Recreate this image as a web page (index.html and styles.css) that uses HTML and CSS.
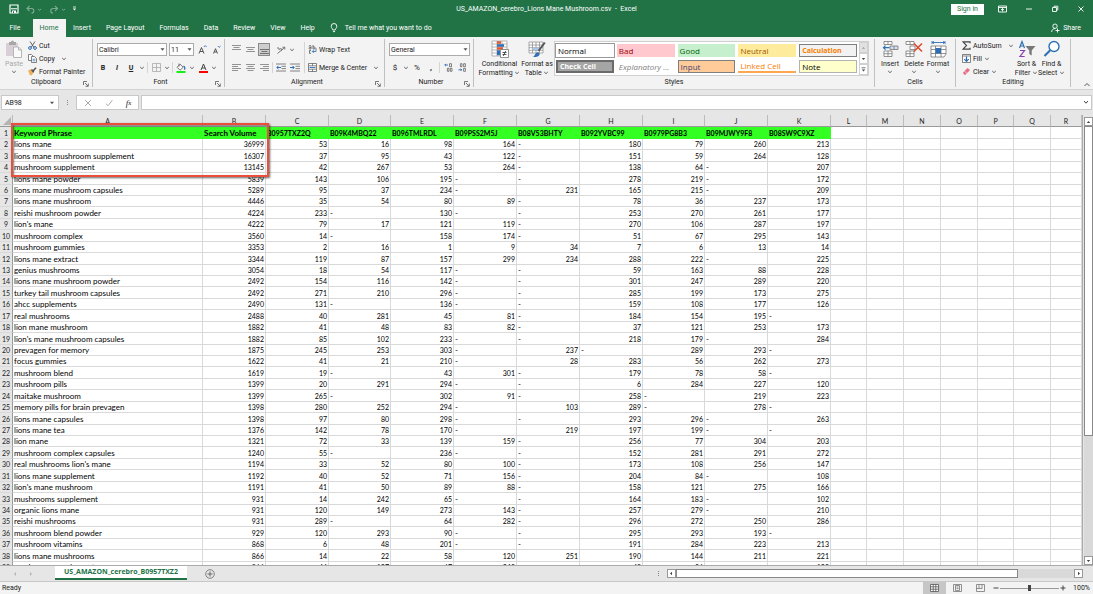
FILE: index.html
```html
<!DOCTYPE html>
<html lang="en">
<head>
    <meta charset="UTF-8">
    <meta name="viewport" content="width=device-width, initial-scale=1.0">
    <title>US_AMAZON_cerebro_Lions Mane Mushroom.csv - Excel</title>
    <link rel="stylesheet" href="styles.css">
</head>
<body>

<!-- shared icons -->
<svg class="defs">
  <symbol id="chev" viewBox="0 0 6 4"><path d="M1.2 1 3 2.7 4.8 1" fill="none" stroke="#555" stroke-width=".9"/></symbol>
  <symbol id="launch" viewBox="0 0 6 6"><path d="M.5 4V.5H4M2 2l3 3M5.3 2.5v2.8H2.5" fill="none" stroke="#555" stroke-width=".8"/></symbol>
</svg>

<div class="app">

  <!-- title bar -->
  <header class="titlebar">
    <div class="quick">
      <button aria-label="Save"><svg width="10" height="10" viewBox="0 0 10 10"><path d="M1 1h8v8H1z" fill="none" stroke="#fff" stroke-width="1.2"/><path d="M2 4.200h6v1H2zM3 6.500h4V9H3z" fill="#fff"/><path d="M4 7.300h1V9H4z" fill="#217346"/></svg></button>
      <button aria-label="Undo" class="dim"><svg width="16" height="9" viewBox="0 0 16 9"><path d="M3.500 1 1 3.500 3.500 6M1 3.500h4.500a2.300 2.300 0 0 1 0 4.600" fill="none" stroke="#fff" stroke-width="1.100"/><path d="M12 4l1.500 1.300L15 4" fill="none" stroke="#fff"/></svg></button>
      <button aria-label="Redo" class="dim"><svg width="16" height="9" viewBox="0 0 16 9"><path d="M6 1l2.500 2.500L6 6M8.500 3.500H4a2.300 2.300 0 0 0 0 4.600" fill="none" stroke="#fff" stroke-width="1.100"/><path d="M13 4l1.500 1.300L16 4" fill="none" stroke="#fff"/></svg></button>
      <button aria-label="Customize toolbar"><svg width="5" height="6" viewBox="0 0 5 6"><path d="M1 1h3" stroke="#fff" stroke-width=".8"/><path d="M.8 2.600h3.400L2.500 4.600z" fill="#fff"/></svg></button>
    </div>
    <h1 class="doc-title">US_AMAZON_cerebro_Lions Mane Mushroom.csv&nbsp; -&nbsp; Excel</h1>
    <div class="window-btns">
      <button class="signin">Sign in</button>
      <button aria-label="Ribbon options"><svg width="9" height="8" viewBox="0 0 9 8"><path d="M.5 1h8v6h-8zM.5 2.500h8M4.500 6.500v-3M3 5l1.500-1.500L6 5" fill="none" stroke="#fff" stroke-width=".9"/></svg></button>
      <button aria-label="Minimize"><svg width="8" height="8" viewBox="0 0 8 8"><path d="M1 4h6" stroke="#fff" stroke-width=".9"/></svg></button>
      <button aria-label="Restore"><svg width="8" height="8" viewBox="0 0 8 8"><path d="M1.500 2.500h4v4h-4zM3 2.500V1.200h3.800V5H5.500" fill="none" stroke="#fff" stroke-width=".9"/></svg></button>
      <button aria-label="Close"><svg width="8" height="8" viewBox="0 0 8 8"><path d="M1.500 1.500l5 5M6.500 1.500l-5 5" stroke="#fff" stroke-width=".9"/></svg></button>
    </div>
  </header>

  <!-- ribbon tabs -->
  <nav class="tabs">
    <button class="tab file">File</button>
    <button class="tab active">Home</button>
    <button class="tab">Insert</button>
    <button class="tab">Page Layout</button>
    <button class="tab">Formulas</button>
    <button class="tab">Data</button>
    <button class="tab">Review</button>
    <button class="tab">View</button>
    <button class="tab">Help</button>
    <button class="tab tell"><svg width="8" height="10" viewBox="0 0 8 10"><path d="M2.800 7c0-1.500-1.600-1.800-1.600-3.700a2.800 2.800 0 0 1 5.600 0C6.800 5.200 5.200 5.500 5.200 7zM2.900 8.600h2.200" fill="none" stroke="#fff" stroke-width=".9"/></svg>Tell me what you want to do</button>
    <button class="tab share"><svg width="9" height="10" viewBox="0 0 9 10"><circle cx="4" cy="3.200" r="2.200" fill="none" stroke="#fff" stroke-width=".9"/><path d="M.7 9c0-2.200 1.500-3.400 3.500-3.400M6.500 5.500v4M4.500 7.500h4" fill="none" stroke="#fff" stroke-width=".9"/></svg>Share</button>
  </nav>

  <!-- ribbon -->
  <div class="ribbon">

    <section class="group clipboard">
      <div class="tools">
        <button class="big paste" disabled><svg width="18" height="18" viewBox="0 0 18 18"><path d="M1 3h12v13H1z" fill="#d8d0d6"/><path d="M4 2h2a1.500 1.500 0 0 1 3 0h2v3H4z" fill="#a7a7a7"/><path d="M8.500 7h5l3 3v7.500h-8z" fill="#fafafa" stroke="#b5b5b5"/><path d="M13.500 7v3h3" fill="none" stroke="#b5b5b5"/></svg><span>Paste</span><svg class="chev"><use href="#chev"/></svg></button>
        <div class="stack">
          <button class="row"><svg width="9" height="9" viewBox="0 0 9 9"><path d="M2 .5l4 6M7 .5l-4 6" stroke="#555" stroke-width=".9"/><circle cx="2" cy="7" r="1.400" fill="none" stroke="#2b6cb5"/><circle cx="7" cy="7" r="1.400" fill="none" stroke="#2b6cb5"/></svg>Cut</button>
          <button class="row"><svg width="9" height="9" viewBox="0 0 9 9"><path d="M.5.5h3l1.500 1.500v4.500H.5z" fill="#fff" stroke="#666" stroke-width=".8"/><path d="M3.500 2.500h3L8.500 4.500v4h-5z" fill="#fff" stroke="#666" stroke-width=".8"/><path d="M4.500 5.200h3M4.500 6.800h3" stroke="#2b6cb5" stroke-width=".7"/></svg>Copy <svg class="chev wide"><use href="#chev"/></svg></button>
          <button class="row"><svg width="9" height="9" viewBox="0 0 9 9"><path d="M0 3.500l3-1.200 2.800 3L3.500 8.500 1.800 8z" fill="#efb15c"/><path d="M3.500 2.500l2.300 2.700M5 4l3-3.200" stroke="#555" stroke-width="1.600"/></svg>Format Painter</button>
        </div>
      </div>
      <h2>Clipboard <svg class="launch"><use href="#launch"/></svg></h2>
    </section>

    <section class="group font">
      <div class="tools rows">
        <div class="line">
          <select class="f-name" aria-label="Font"><option>Calibri</option></select>
          <select class="f-size" aria-label="Font size"><option>11</option></select>
          <button class="ic" aria-label="Increase font size"><svg width="9" height="9" viewBox="0 0 9 9"><path d="M1 8.500L3.500 2.500 6 8.500M2 6.500h3" fill="none" stroke="#444" stroke-width=".9"/><path d="M5.800 2l1.400-1.400L8.600 2" fill="none" stroke="#2b6cb5" stroke-width=".9"/></svg></button>
          <button class="ic" aria-label="Decrease font size"><svg width="9" height="9" viewBox="0 0 9 9"><path d="M1.500 8.500L3.500 3.700 5.500 8.500M2.300 7h2.400" fill="none" stroke="#444" stroke-width=".9"/><path d="M5.800 1l1.400 1.400L8.600 1" fill="none" stroke="#2b6cb5" stroke-width=".9"/></svg></button>
        </div>
        <div class="line">
          <button class="ic"><b>B</b></button>
          <button class="ic"><b><i>I</i></b></button>
          <button class="ic"><b><u>U</u></b></button>
          <svg class="chev"><use href="#chev"/></svg>
          <span class="sep"></span>
          <button class="ic" aria-label="Borders"><svg width="9" height="9" viewBox="0 0 9 9"><path d="M.5.5h8v8h-8zM4.500.5v8M.5 4.500h8" fill="none" stroke="#aaa" stroke-width=".8"/></svg></button>
          <svg class="chev"><use href="#chev"/></svg>
          <span class="sep"></span>
          <button class="ic" aria-label="Fill color"><svg width="10" height="10" viewBox="0 0 10 10"><path d="M4 1.200l3.200 3L4 7.200 1.200 4.300zM3 .5v3" fill="#fff" stroke="#555" stroke-width=".8"/><path d="M7.500 3c1.600 1 1.600 2.500.9 3.600" fill="none" stroke="#2b6cb5" stroke-width="1.300"/><path d="M.5 8h9v2h-9z" fill="#17f017"/></svg></button>
          <svg class="chev"><use href="#chev"/></svg>
          <button class="ic" aria-label="Font color"><svg width="9" height="10" viewBox="0 0 9 10"><path d="M2 7L4.500 1 7 7M3 5h3" fill="none" stroke="#444"/><path d="M0 8h9v2H0z" fill="#f00"/></svg></button>
          <svg class="chev"><use href="#chev"/></svg>
        </div>
      </div>
      <h2>Font <svg class="launch"><use href="#launch"/></svg></h2>
    </section>

    <section class="group align">
      <div class="tools">
        <div class="rows">
          <div class="line">
            <button class="ic" aria-label="Top align"><svg width="9" height="9" viewBox="0 0 9 9"><path d="M0 .5h9M1.500 2.500h6M0 4.500h9" stroke="#888" stroke-width=".9"/></svg></button>
            <button class="ic" aria-label="Middle align"><svg width="9" height="9" viewBox="0 0 9 9"><path d="M0 2.500h9M1.500 4.500h6M0 6.500h9" stroke="#888" stroke-width=".9"/></svg></button>
            <button class="ic on" aria-label="Bottom align"><svg width="9" height="9" viewBox="0 0 9 9"><path d="M0 4.500h9M1.500 6.500h6M0 8.500h9" stroke="#666" stroke-width=".9"/></svg></button>
            <button class="ic orient" aria-label="Orientation"><svg width="10" height="9" viewBox="0 0 10 9"><path d="M1 3.500a1.200 1.200 0 1 1 1.800 1.500M3.800 4.500a1.100 1.100 0 1 1 1.500 1.300M1.500 8.500l7-6M6.500 2.200h2.300v2.300" fill="none" stroke="#555" stroke-width=".8"/></svg></button>
            <svg class="chev"><use href="#chev"/></svg>
          </div>
          <div class="line">
            <button class="ic" aria-label="Align left"><svg width="9" height="9" viewBox="0 0 9 9"><path d="M0 1.500h9M0 3.500h6M0 5.500h9M0 7.500h6" stroke="#888" stroke-width=".9"/></svg></button>
            <button class="ic" aria-label="Center"><svg width="9" height="9" viewBox="0 0 9 9"><path d="M0 1.500h9M1.500 3.500h6M0 5.500h9M1.500 7.500h6" stroke="#888" stroke-width=".9"/></svg></button>
            <button class="ic" aria-label="Align right"><svg width="9" height="9" viewBox="0 0 9 9"><path d="M0 1.500h9M3 3.500h6M0 5.500h9M3 7.500h6" stroke="#888" stroke-width=".9"/></svg></button>
            <span class="sep"></span>
            <button class="ic" aria-label="Decrease indent"><svg width="10" height="9" viewBox="0 0 10 9"><path d="M0 1h10M5.500 3.300H10M5.500 5.600H10M0 8h10" stroke="#777" stroke-width=".9"/><path d="M5 4.500H1M2.500 2.800L.8 4.500l1.700 1.700" fill="none" stroke="#2b6cb5"/></svg></button>
            <button class="ic" aria-label="Increase indent"><svg width="10" height="9" viewBox="0 0 10 9"><path d="M0 1h10M5.500 3.300H10M5.500 5.600H10M0 8h10" stroke="#777" stroke-width=".9"/><path d="M0 4.500h4M2.500 2.800l1.700 1.700-1.700 1.700" fill="none" stroke="#2b6cb5"/></svg></button>
          </div>
        </div>
        <span class="divider"></span>
        <div class="rows">
          <div class="line"><button class="row"><svg width="9" height="9" viewBox="0 0 9 9"><path d="M1 1.500a1 1 0 0 1 2 0V4H1.800a.7.7 0 0 1 0-1.500H3M5 0v4h1a1 1 0 0 0 0-2.200H5M3 5.500H1.500v2.800H3" fill="none" stroke="#555" stroke-width=".8"/><path d="M8 3v3.500H4.500M5.800 5L4.300 6.500 5.800 8" fill="none" stroke="#2b6cb5" stroke-width=".8"/></svg>Wrap Text</button></div>
          <div class="line"><button class="row"><svg width="9" height="9" viewBox="0 0 9 9"><path d="M.5.5h8v8h-8zM.5 2.800h8M.5 6.200h8M4.500.5v2.300M4.500 6.200v2.300" fill="#fff" stroke="#666" stroke-width=".8"/><path d="M1.500 4.500h6" stroke="#2b6cb5" stroke-width=".9"/></svg>Merge &amp; Center <svg class="chev wide"><use href="#chev"/></svg></button></div>
        </div>
      </div>
      <h2>Alignment <svg class="launch"><use href="#launch"/></svg></h2>
    </section>

    <section class="group number">
      <div class="tools rows">
        <div class="line"><select class="f-num" aria-label="Number format"><option>General</option></select></div>
        <div class="line">
          <button class="ic sym">$</button>
          <svg class="chev"><use href="#chev"/></svg>
          <button class="ic sym">%</button>
          <button class="ic sym"><b>,</b></button>
          <span class="sep"></span>
          <button class="ic" aria-label="Increase decimal"><svg width="9" height="9" viewBox="0 0 9 9"><path d="M4 2H.8M2 .8L.8 2 2 3.200" fill="none" stroke="#2b6cb5" stroke-width=".9"/><path d="M5.500.7h2v3h-2zM3.400 5.300h1.600v3H3.400zM6.400 5.300H8v3H6.400z" fill="none" stroke="#666" stroke-width=".8"/></svg></button>
          <button class="ic" aria-label="Decrease decimal"><svg width="9" height="9" viewBox="0 0 9 9"><path d="M.5 6.800h3.200M2.500 5.600l1.200 1.200L2.500 8" fill="none" stroke="#2b6cb5" stroke-width=".9"/><path d="M2.400.7H4v3H2.400zM5.600.7h1.800v3H5.600zM5.600 5.300h1.800v3H5.600z" fill="none" stroke="#666" stroke-width=".8"/></svg></button>
        </div>
      </div>
      <h2>Number <svg class="launch"><use href="#launch"/></svg></h2>
    </section>

    <section class="group styles">
      <div class="tools">
        <button class="big cond"><svg width="18" height="18" viewBox="0 0 18 18"><path d="M1 1h15v15H1zM1 4h15M1 7h15M1 10h15M1 13h15M6 1v15M11 1v15" fill="#fff" stroke="#999" stroke-width=".7"/><path d="M6 1.300h4v2.400H6zM6 7.300h6v2.400H6z" fill="#e0592f"/><path d="M6 4.300h7v2.400H6zM6 10.300h3v5H6z" fill="#2f6fb3"/><path d="M9.500 9.500h8v8h-8z" fill="#fff" stroke="#777" stroke-width=".8"/><path d="M11.500 12.500h4M11.500 14.500h4M14.700 11l-2.400 5" stroke="#333" stroke-width=".8"/></svg><span>Conditional<br>Formatting <svg class="chev"><use href="#chev"/></svg></span></button>
        <button class="big fmt"><svg width="18" height="18" viewBox="0 0 18 18"><path d="M1 2h14v11H1zM1 5h14M1 7.700h14M1 10.300h14M4.500 2v11M8 2v11M11.500 2v11" fill="#fff" stroke="#888" stroke-width=".7"/><path d="M4.500 7.700h8v2.600h-8z" fill="#a9c6e6"/><path d="M16.800 2.500L10.500 11" stroke="#555" stroke-width="2"/><path d="M4.500 17c2.300-.2 2.500-4.500 5.500-4.700 2.200.4 2 2.700.5 3.800-1.700 1.200-4 1.100-6 .9z" fill="#2f6fb3"/></svg><span>Format as<br>Table <svg class="chev"><use href="#chev"/></svg></span></button>
        <div class="gallery">
          <div class="swatches">
            <button class="sw normal">Normal</button>
            <button class="sw bad">Bad</button>
            <button class="sw good">Good</button>
            <button class="sw neutral">Neutral</button>
            <button class="sw calc">Calculation</button>
            <button class="sw check">Check Cell</button>
            <button class="sw expl">Explanatory ...</button>
            <button class="sw input">Input</button>
            <button class="sw linked">Linked Cell</button>
            <button class="sw note">Note</button>
          </div>
          <div class="g-scroll">
            <button class="off" aria-label="Scroll up"><svg width="5" height="4" viewBox="0 0 5 4"><path d="M1 2.800L2.500 1 4 2.800z" fill="#999"/></svg></button>
            <button aria-label="Scroll down"><svg width="5" height="4" viewBox="0 0 5 4"><path d="M.8 1L2.500 3 4.200 1z" fill="#444"/></svg></button>
            <button aria-label="More styles"><svg width="5" height="5" viewBox="0 0 5 5"><path d="M.5.5h4v.8h-4zM.8 2.500L2.500 4.500 4.200 2.500z" fill="#444"/></svg></button>
          </div>
        </div>
      </div>
      <h2>Styles</h2>
    </section>

    <section class="group cells">
      <div class="tools">
        <button class="big"><svg width="17" height="18" viewBox="0 0 17 18"><path d="M2 1.500h8v3H2zM6 1.500v3M2 11h8v5.500H2zM6 11v5.500M2 13.700h8" fill="#fff" stroke="#777" stroke-width=".8"/><path d="M8 6h8v3.500H8zM12 6v3.500" fill="#cfe0f2" stroke="#777" stroke-width=".8"/><path d="M7.500 7.700h-6M3.500 5.700l-2 2 2 2" fill="none" stroke="#2f6fb3" stroke-width="1.200"/></svg><span>Insert</span><svg class="chev"><use href="#chev"/></svg></button>
        <button class="big"><svg width="18" height="18" viewBox="0 0 18 18"><path d="M1 1.500h8v3H1zM5 1.500v3M1 11h8v5.500H1zM5 11v5.500M1 13.700h8M5 6h5v3.500H5z" fill="#fff" stroke="#777" stroke-width=".8"/><path d="M9 3.500l8 8M17 3.500l-8 8" stroke="#d9482b" stroke-width="1.500"/></svg><span>Delete</span><svg class="chev"><use href="#chev"/></svg></button>
        <button class="big"><svg width="17" height="18" viewBox="0 0 17 18"><path d="M2 1v3M15 1v3M2 2.500h13M4 1.300L2.500 2.500 4 3.700M13 1.300l1.500 1.200L13 3.700" fill="none" stroke="#2f6fb3" stroke-width=".9"/><path d="M1 6h15v8l-2 3H1zM1 9.500h15M1 13.500h15M5.500 6v11M11 6v11" fill="#fff" stroke="#777" stroke-width=".8"/><path d="M5.500 8h5.500v5.500H5.500z" fill="#2f6fb3"/></svg><span>Format</span><svg class="chev"><use href="#chev"/></svg></button>
      </div>
      <h2>Cells</h2>
    </section>

    <section class="group editing">
      <div class="tools">
        <div class="stack">
          <button class="row"><svg width="9" height="9" viewBox="0 0 9 9"><path d="M8 2.200V.8H1l3.500 3.700L1 8.200h7V6.800" fill="none" stroke="#444" stroke-width="1.200"/></svg>AutoSum <svg class="chev wide"><use href="#chev"/></svg></button>
          <button class="row"><svg width="9" height="9" viewBox="0 0 9 9"><path d="M.5.5h8v8h-8zM.5 2h8" fill="#fff" stroke="#666" stroke-width=".8"/><path d="M4.500 2.500v5M2.300 5.200l2.200 2.200 2.200-2.200" fill="none" stroke="#2b6cb5" stroke-width="1.200"/></svg>Fill <svg class="chev"><use href="#chev"/></svg></button>
          <button class="row"><svg width="9" height="9" viewBox="0 0 9 9"><path d="M1 5.500L5.500 1 8 3 3.500 7.800H2z" fill="#e5708a"/><path d="M2.500 4l2.500 2.500" stroke="#fff" stroke-width=".6"/></svg>Clear <svg class="chev"><use href="#chev"/></svg></button>
        </div>
        <button class="big"><svg width="18" height="18" viewBox="0 0 18 18"><path d="M1.500 8L4 1.500 6.500 8M2.500 6h3" fill="none" stroke="#2f6fb3" stroke-width="1.200"/><path d="M2 10.500h4.500L2 16.500h4.700" fill="none" stroke="#8a3fb0" stroke-width="1.200"/><path d="M7.500 6h10l-3.800 4.500v5l-2.400-1.500v-3.500z" fill="#777"/></svg><span>Sort &amp;<br>Filter <svg class="chev"><use href="#chev"/></svg></span></button>
        <button class="big"><svg width="18" height="18" viewBox="0 0 18 18"><circle cx="11" cy="6.500" r="5" fill="#fff" stroke="#2f6fb3" stroke-width="1.400"/><path d="M7.200 10.200L1.500 16" stroke="#2f6fb3" stroke-width="2"/></svg><span>Find &amp;<br>Select <svg class="chev"><use href="#chev"/></svg></span></button>
      </div>
      <h2>Editing</h2>
    </section>

    <button class="collapse" aria-label="Collapse ribbon"><svg width="8" height="5" viewBox="0 0 8 5"><path d="M1.500 4L4 1.500 6.500 4" fill="none" stroke="#444" stroke-width=".9"/></svg></button>
  </div>

  <!-- formula bar -->
  <div class="formula">
    <label class="namebox"><input type="text" value="AB98" aria-label="Name box"><svg width="6" height="4" viewBox="0 0 6 4"><path d="M1 .8L3 3.200 5 .8z" fill="#555"/></svg></label>
    <span class="dots"><i></i><i></i><i></i></span>
    <div class="f-btns">
      <button aria-label="Cancel"><svg width="8" height="8" viewBox="0 0 8 8"><path d="M1.200 1.200l5.600 5.600M6.800 1.200L1.200 6.800" stroke="#aaa"/></svg></button>
      <button aria-label="Enter"><svg width="8" height="8" viewBox="0 0 8 8"><path d="M.8 4.500L3 6.700 7.300 1.300" fill="none" stroke="#aaa"/></svg></button>
      <button class="fx"><i>f</i><small>x</small></button>
    </div>
    <label class="f-input"><input type="text" aria-label="Formula"><svg width="8" height="5" viewBox="0 0 8 5"><path d="M2 1l2 2.200L6 1" fill="none" stroke="#444"/></svg></label>
  </div>

  <!-- sheet -->
  <main class="sheet">
    <div class="grid-wrap">
      <table id="grid">
        <colgroup id="cols"></colgroup>
        <thead><tr id="letters"></tr></thead>
        <tbody id="cells"></tbody>
      </table>
      <div class="highlight"></div>
    </div>
    <div class="vbar">
      <button aria-label="Scroll up"><svg width="5" height="4" viewBox="0 0 5 4"><path d="M.8 3L2.500 1 4.200 3z" fill="#444"/></svg></button>
      <div class="track"><div class="thumb"></div></div>
      <button aria-label="Scroll down"><svg width="5" height="4" viewBox="0 0 5 4"><path d="M.8 1L2.500 3 4.200 1z" fill="#444"/></svg></button>
    </div>
  </main>

  <!-- sheet tabs and horizontal scroll -->
  <div class="sheetbar">
    <div class="sheet-nav">
      <button aria-label="Previous sheet"><svg width="4" height="6" viewBox="0 0 4 6"><path d="M3 1v4L1 3z" fill="#b5b5b5"/></svg></button>
      <button aria-label="Next sheet"><svg width="4" height="6" viewBox="0 0 4 6"><path d="M1 1v4l2-2z" fill="#b5b5b5"/></svg></button>
    </div>
    <button class="sheet-tab">US_AMAZON_cerebro_B0957TXZ2</button>
    <button class="add" aria-label="New sheet"><svg width="10" height="10" viewBox="0 0 10 10"><circle cx="5" cy="5" r="4.300" fill="none" stroke="#777" stroke-width=".9"/><path d="M5 2.500v5M2.500 5h5" stroke="#666"/></svg></button>
    <span class="dots"><i></i><i></i><i></i></span>
    <div class="hbar">
      <button aria-label="Scroll left"><svg width="4" height="5" viewBox="0 0 4 5"><path d="M3 .8L1 2.500l2 1.700z" fill="#444"/></svg></button>
      <div class="track"><div class="thumb"></div></div>
      <button aria-label="Scroll right"><svg width="4" height="5" viewBox="0 0 4 5"><path d="M1 .8l2 1.700-2 1.700z" fill="#444"/></svg></button>
    </div>
  </div>

  <!-- status bar -->
  <footer class="status">
    <span class="ready">Ready</span>
    <button class="view on" aria-label="Normal view"><svg width="9" height="8" viewBox="0 0 9 8"><path d="M.5.5h8v7h-8zM.5 2.800h8M.5 5.200h8M3.200.5v7M5.800.5v7" fill="#fff" stroke="#555" stroke-width=".8"/></svg></button>
    <button class="view" aria-label="Page layout view"><svg width="9" height="8" viewBox="0 0 9 8"><path d="M.5.5h8v7h-8zM2.500 1.500h4v5h-4zM3.500 3h2M3.500 4.500h2" fill="none" stroke="#777" stroke-width=".8"/></svg></button>
    <button class="view" aria-label="Page break view"><svg width="9" height="8" viewBox="0 0 9 8"><path d="M.5.5h8v7h-8zM3 .5v4h3v-4M.5 4.500H3" fill="none" stroke="#777" stroke-width=".8"/></svg></button>
    <button class="zoom" aria-label="Zoom out"><svg width="6" height="6" viewBox="0 0 6 6"><path d="M.5 3h5" stroke="#444"/></svg></button>
    <input class="slider" type="range" min="0" max="200" value="100" aria-label="Zoom">
    <button class="zoom" aria-label="Zoom in"><svg width="6" height="6" viewBox="0 0 6 6"><path d="M.5 3h5M3 .5v5" stroke="#444"/></svg></button>
    <span class="pct">100%</span>
  </footer>
</div>

<script>
// first row is the header, "-" means not ranked
var rows = [
  "Keyword Phrase|Search Volume|B0957TXZ2Q|B09K4MBQ22|B096TMLRDL|B09PSS2M5J|B08V53BHTY|B092YVBC99|B0979PG8B3|B09MJWY9F8|B08SW9C9XZ",
  "lions mane|36999|53|16|98|164|-|180|79|260|213",
  "lions mane mushroom supplement|16307|37|95|43|122|-|151|59|264|128",
  "mushroom supplement|13145|42|267|53|264|-|138|64|-|207",
  "lions mane powder|5839|143|106|195|-|-|278|219|-|172",
  "lions mane mushroom capsules|5289|95|37|234|-|231|165|215|-|209",
  "lions mane mushroom|4446|35|54|80|89|-|78|36|237|173",
  "reishi mushroom powder|4224|233|-|130|-|-|253|270|261|177",
  "lion's mane|4222|79|17|121|119|-|270|106|287|197",
  "mushroom complex|3560|14|-|158|174|-|51|67|295|143",
  "mushroom gummies|3353|2|16|1|9|34|7|6|13|14",
  "lions mane extract|3344|119|87|157|299|234|288|222|-|225",
  "genius mushrooms|3054|18|54|117|-|-|59|163|88|228",
  "lions mane mushroom powder|2492|154|116|142|-|-|301|247|289|220",
  "turkey tail mushroom capsules|2492|271|210|296|-|-|285|199|173|275",
  "ahcc supplements|2490|131|-|136|-|-|159|108|177|126",
  "real mushrooms|2488|40|281|45|81|-|184|154|195|-",
  "lion mane mushroom|1882|41|48|83|82|-|37|121|253|173",
  "lion's mane mushroom capsules|1882|85|102|233|-|-|218|179|-|284",
  "prevagen for memory|1875|245|253|303|-|237|-|289|293|-",
  "focus gummies|1622|41|21|210|-|28|283|56|262|273",
  "mushroom blend|1619|19|-|43|301|-|179|78|58|-",
  "mushroom pills|1399|20|291|294|-|-|6|284|227|120",
  "maitake mushroom|1399|265|-|302|91|-|258|-|219|223",
  "memory pills for brain prevagen|1398|280|252|294|-|103|289|-|278|-",
  "lions mane capsules|1398|97|80|298|-|-|293|296|-|263",
  "lions mane tea|1376|142|78|170|-|219|197|199|-|-",
  "lion mane|1321|72|33|139|159|-|256|77|304|203",
  "mushroom complex capsules|1240|55|-|236|-|-|152|281|291|272",
  "real mushrooms lion's mane|1194|33|52|80|100|-|173|108|256|147",
  "lions mane supplement|1192|40|52|71|156|-|204|84|-|108",
  "lion's mane mushroom|1191|41|50|89|88|-|158|121|275|166",
  "mushrooms supplement|931|14|242|65|-|-|164|183|-|102",
  "organic lions mane|931|120|149|273|143|-|257|279|-|210",
  "reishi mushrooms|931|289|-|64|282|-|296|272|250|286",
  "mushroom blend powder|929|120|293|90|-|-|295|293|193|-",
  "mushroom vitamins|868|6|48|201|-|-|191|284|223|213",
  "lions mane mushrooms|866|14|22|58|120|251|190|144|211|221",
  "mushroom supplements|866|44|127|67|243||43|36||123"
];
var letters = "ABCDEFGHIJKLMNOPQR".split("");

// column widths, the last one takes what is left
var widths = ["c-key", "c-data", "c-data", "c-data-s", "c-data", "c-data", "c-data", "c-data", "c-data-s", "c-data", "c-data",
  "c-empty-s", "c-empty", "c-empty", "c-empty", "c-empty-s", "c-empty", ""];
var cols = '<col class="c-num">';
var head = '<th class="corner"><svg width="8" height="8" viewBox="0 0 8 8"><path d="M8 0v8H0z" fill="#b4b4b4"/></svg></th>';
letters.forEach(function(l, i) {
  cols += '<col class="' + widths[i] + '">';
  head += '<th scope="col">' + l + '</th>';
});
document.getElementById("cols").innerHTML = cols;
document.getElementById("letters").innerHTML = head;

// cells
var html = "";
rows.forEach(function(row, r) {
  var vals = row.split("|");
  html += '<tr><th scope="row">' + (r + 1) + '</th>';
  letters.forEach(function(l, i) {
    var v = vals[i] || "";
    var cls = i > 10 ? "" : r == 0 ? (i < 2 ? "key name" : "key") : /^\d+$/.test(v) ? "n" : "t";
    html += '<td class="' + cls + '">' + v + '</td>';
  });
  html += '</tr>';
});
document.getElementById("cells").innerHTML = html;
</script>
</body>
</html>
```
FILE: styles.css
```css
* {
  box-sizing: border-box;
}

body {
  margin: 0;
  font-family: Roboto, "Noto Sans", sans-serif;
  font-size: 7px;
  line-height: 10px;
  color: #222;
}

button, input, select {
  font: inherit;
  color: inherit;
  margin: 0;
  padding: 0;
  border: 0;
  background: none;
  border-radius: 0;
}

button {
  display: flex;
  align-items: center;
  justify-content: center;
  white-space: nowrap;
}

svg {
  flex: none;
  display: block;
}

h1, h2 {
  margin: 0;
  font-size: 7px;
  font-weight: normal;
}

.defs {
  display: none;
}

.app {
  display: flex;
  flex-direction: column;
  height: 100vh;
  background: #e6e6e6;
  overflow: hidden;
}

/* title bar */
.titlebar {
  flex: none;
  height: 18px;
  display: grid;
  grid-template-columns: 1fr auto 1fr;
  align-items: center;
  background: #217346;
  color: #fff;
}

.quick {
  display: flex;
  align-items: center;
  gap: 7px;
  padding-left: 9px;
}

.quick .dim {
  opacity: .4;
}

.window-btns {
  display: flex;
  justify-content: flex-end;
  align-items: center;
  gap: 18px;
  padding-right: 8px;
}

.signin {
  width: 33px;
  height: 11px;
  background: #fff;
  color: #217346;
}

.window-btns .signin {
  margin-right: -4px;
}

/* tabs */
.tabs {
  flex: none;
  height: 19px;
  display: flex;
  background: #217346;
  color: #fff;
  padding-top: 1px;
}

.tab {
  padding: 0 8px 0 7px;
}

.tab.file {
  width: 33px;
  padding-right: 10px;
}

.tab.active {
  background: #f3f3f3;
  color: #217346;
  width: 33px;
}

.tell {
  gap: 7px;
}

.tab.share {
  margin-left: auto;
  gap: 3px;
  padding-right: 12px;
}

/* ribbon */
.ribbon {
  flex: none;
  height: 53px;
  display: flex;
  background: #f3f3f3;
  border-bottom: 1px solid #d2d2d2;
  padding: 2px 0;
}

.group {
  display: flex;
  flex-direction: column;
  border-right: 1px solid #c0c0c0;
  flex: none;
}

.group h2 {
  display: flex;
  justify-content: center;
  position: relative;
  height: 9px;
  line-height: 9px;
}

.launch {
  position: absolute;
  right: 3px;
  top: 3px;
  width: 6px;
  height: 6px;
}

.tools {
  flex: 1;
  display: flex;
}

.chev {
  width: 6px;
  height: 4px;
  display: inline-block;
}

.chev.wide {
  margin-left: 4px;
}

.rows {
  display: flex;
  flex-direction: column;
  gap: 5px;
  padding-top: 4px;
}

.line {
  display: flex;
  align-items: center;
  height: 13px;
  gap: 2px;
}

.ic {
  width: 12px;
  height: 13px;
}

.ic.on {
  background: #cdcdcd;
  border: 1px solid #8a8a8a;
}

.ic.sym {
  font-size: 8px;
}

.orient {
  margin-left: 3px;
}

.sep {
  width: 1px;
  height: 11px;
  background: #d4d4d4;
}

.divider {
  width: 1px;
  margin: 3px 3px 5px;
  background: #d4d4d4;
}

.stack {
  display: flex;
  flex-direction: column;
  align-items: flex-start;
}

.row {
  height: 13px;
  gap: 2px;
}

.big {
  flex-direction: column;
  justify-content: flex-start;
  line-height: 9px;
  padding-top: 1px;
}

.big span {
  margin-top: 2px;
}

.big > .chev {
  margin-top: 1px;
}

.paste {
  color: #a8a8a8;
  width: 28px;
}

select {
  appearance: none;
  height: 13px;
  padding: 0 3px 0 1px;
  background: #fff url('data:image/svg+xml,<svg xmlns="http://www.w3.org/2000/svg" width="5" height="3"><path d="M.5 .3h4l-2 2.400z" fill="%23555"/></svg>') no-repeat right 1px center;
  border: 1px solid #ababab;
}

.clipboard {
  width: 93px;
}

.font {
  width: 132px;
  padding-left: 4px;
}

.f-name {
  width: 70px;
}

.f-size {
  width: 25px;
}

.align {
  width: 160px;
  padding-left: 5px;
}

.number {
  width: 89px;
  padding-left: 4px;
}

.f-num {
  width: 81px;
}

.styles {
  flex: 1;
  padding: 0 5px;
}

.cond {
  width: 41px;
}

.fmt {
  width: 34px;
}

.gallery {
  flex: 1;
  display: flex;
  height: 35px;
  margin-top: 2px;
  background: #fff;
  border: 1px solid #d0d0d0;
}

.swatches {
  flex: 1;
  display: grid;
  grid-template-columns: repeat(5, 1fr);
  grid-template-rows: 13px 13px;
  gap: 3px;
  padding: 2px 2px 2px 1px;
}

.sw {
  justify-content: flex-start;
  padding: 0 2px;
  font-family: "Open Sans", sans-serif;
  font-size: 8px;
  color: #000;
  overflow: hidden;
}

.normal {
  outline: 1px solid #999;
}

.bad {
  background: #ffc7ce;
  color: #9c0006;
}

.good {
  background: #c6efce;
  color: #006100;
}

.neutral {
  background: #ffeb9c;
  color: #9c5700;
}

.calc {
  background: #f2f2f2;
  color: #fa7d00;
  font-size: 7px;
  font-weight: bold;
  border: 1px solid #7f7f7f;
}

.check {
  background: #a5a5a5;
  color: #fff;
  font-size: 7px;
  font-weight: bold;
  border: 2px solid #6a6a6a;
}

.expl {
  color: #7f7f7f;
  font-style: italic;
}

.input {
  background: #ffcc99;
  color: #3f3f76;
  border: 1px solid #7f7f7f;
}

.linked {
  color: #fa7d00;
  border-bottom: 2px solid #ffa650;
}

.note {
  background: #ffffcc;
  border: 1px solid #b2b2b2;
}

.g-scroll {
  width: 9px;
  display: flex;
  flex-direction: column;
}

.g-scroll button {
  flex: 1;
  border: 1px solid #d0d0d0;
}

.g-scroll .off {
  background: #e1e1e1;
}

.cells {
  width: 81px;
}

.cells .tools {
  padding-left: 3px;
}

.cells .big {
  width: 24px;
}

.editing {
  width: 115px;
}

.editing .tools {
  padding-left: 6px;
}

.editing .stack {
  width: 52px;
}

.editing .big {
  width: 25px;
}

.collapse {
  width: 22px;
  padding-left: 10px;
  align-items: flex-end;
}

/* formula bar */
.formula {
  flex: none;
  display: flex;
  height: 25px;
  padding: 5px 1px;
}

.namebox, .f-btns, .f-input {
  display: flex;
  align-items: center;
  background: #fff;
  border: 1px solid #c8c8c8;
}

.namebox {
  width: 58px;
  padding: 0 3px;
}

.namebox input, .f-input input {
  flex: 1;
  min-width: 0;
}

.dots {
  width: 17px;
  display: flex;
  flex-direction: column;
  align-items: center;
  justify-content: center;
  gap: 1px;
}

.dots i {
  width: 1px;
  height: 1px;
  background: #888;
}

.f-btns {
  width: 63px;
  justify-content: space-around;
  margin-right: 2px;
}

.fx {
  font-family: "Liberation Serif", serif;
  font-size: 9px;
}

.fx small {
  font-size: 7px;
  font-style: italic;
}

.f-input {
  flex: 1;
  padding-right: 1px;
}

/* sheet */
.sheet {
  flex: 1;
  min-height: 0;
  display: flex;
}

.grid-wrap {
  flex: 1;
  min-width: 0;
  position: relative;
  overflow: hidden;
  background: #fff;
  border-right: 1px solid #ababab;
}

#grid {
  width: 100%;
  table-layout: fixed;
  border-collapse: separate;
  border-spacing: 0;
  font-family: Lato, sans-serif;
  color: #000;
}

.c-num {
  width: 13px;
}

.c-key {
  width: 190px;
}

.c-data {
  width: 63px;
}

.c-data-s {
  width: 62px;
}

.c-empty {
  width: 37px;
}

.c-empty-s {
  width: 36px;
}

#grid th, #grid td {
  padding: 0 1px;
  line-height: 10px;
  border-right: 1px solid #d9d9d9;
  border-bottom: 1px solid #d9d9d9;
  white-space: nowrap;
}

#grid tr {
  height: 11px;
}

/* rows alternate so that seven of them take 80px */
#grid tbody tr:nth-child(7n+1), #grid tbody tr:nth-child(7n+3), #grid tbody tr:nth-child(7n+5) {
  height: 12px;
}

#grid th {
  background: #e6e6e6;
  color: #222;
  font-weight: normal;
  font-size: 7px;
  text-align: center;
}

#grid tbody th {
  border-right-color: #999;
}

#grid thead tr {
  height: 12px;
}

#grid thead th {
  border-bottom-color: #999;
  border-right-color: #bbb;
}

#grid .corner svg {
  margin-left: auto;
}

#grid .t {
  font-size: 8px;
}

#grid .n {
  font-size: 7px;
  text-align: right;
}

#grid .key {
  font-size: 7px;
  font-weight: bold;
  background: #33ff22;
  border-color: #33ff22;
}

#grid .key.name {
  font-size: 8px;
}

.highlight {
  position: absolute;
  left: 11px;
  top: 8px;
  width: 258px;
  height: 54px;
  border: 2px solid #ea4f3a;
  box-shadow: 1px 1px 2px rgba(0, 0, 0, .6), inset 1px 1px 2px rgba(0, 0, 0, .5);
}

.vbar {
  width: 10px;
  display: flex;
  flex-direction: column;
  padding: 2px 0 0 1px;
}

.vbar button, .hbar button {
  width: 9px;
  height: 9px;
  flex: none;
  background: #fff;
  border: 1px solid #999;
}

.track {
  flex: 1;
  background: #d9d9d9;
}

.thumb {
  background: #fff;
  border: 1px solid #888;
}

.vbar .thumb {
  height: 72%;
}

.hbar .thumb {
  width: 86%;
  height: 100%;
}

/* sheet tabs */
.sheetbar {
  flex: none;
  height: 17px;
  display: flex;
  border-top: 1px solid #ababab;
  border-bottom: 1px solid #c8c8c8;
}

.sheet-nav {
  width: 55px;
  display: flex;
  align-items: center;
  gap: 12px;
  padding-left: 13px;
}

.sheet-tab {
  width: 132px;
  height: 14px;
  background: #fff;
  border-bottom: 2px solid #217346;
  color: #217346;
  font-family: "Open Sans", sans-serif;
  font-weight: bold;
}

.add {
  margin: 0 auto 0 18px;
}

.hbar {
  width: 39%;
  display: flex;
  align-items: center;
  padding-right: 10px;
}

.hbar .track {
  height: 9px;
}

/* status bar */
.status {
  flex: none;
  height: 12px;
  display: flex;
  align-items: center;
  background: #f3f3f3;
  padding: 0 3px 0 2px;
}

.ready {
  margin-right: auto;
}

.view {
  width: 23px;
  height: 12px;
}

.view.on {
  background: #c6c6c6;
}

.zoom {
  width: 8px;
}

.slider {
  appearance: none;
  width: 59px;
  height: 8px;
  background: linear-gradient(#999, #999) center / 100% 1px no-repeat;
}

.slider::-webkit-slider-thumb {
  appearance: none;
  width: 3px;
  height: 6px;
  background: #444;
}

.pct {
  width: 23px;
  text-align: right;
}
```
